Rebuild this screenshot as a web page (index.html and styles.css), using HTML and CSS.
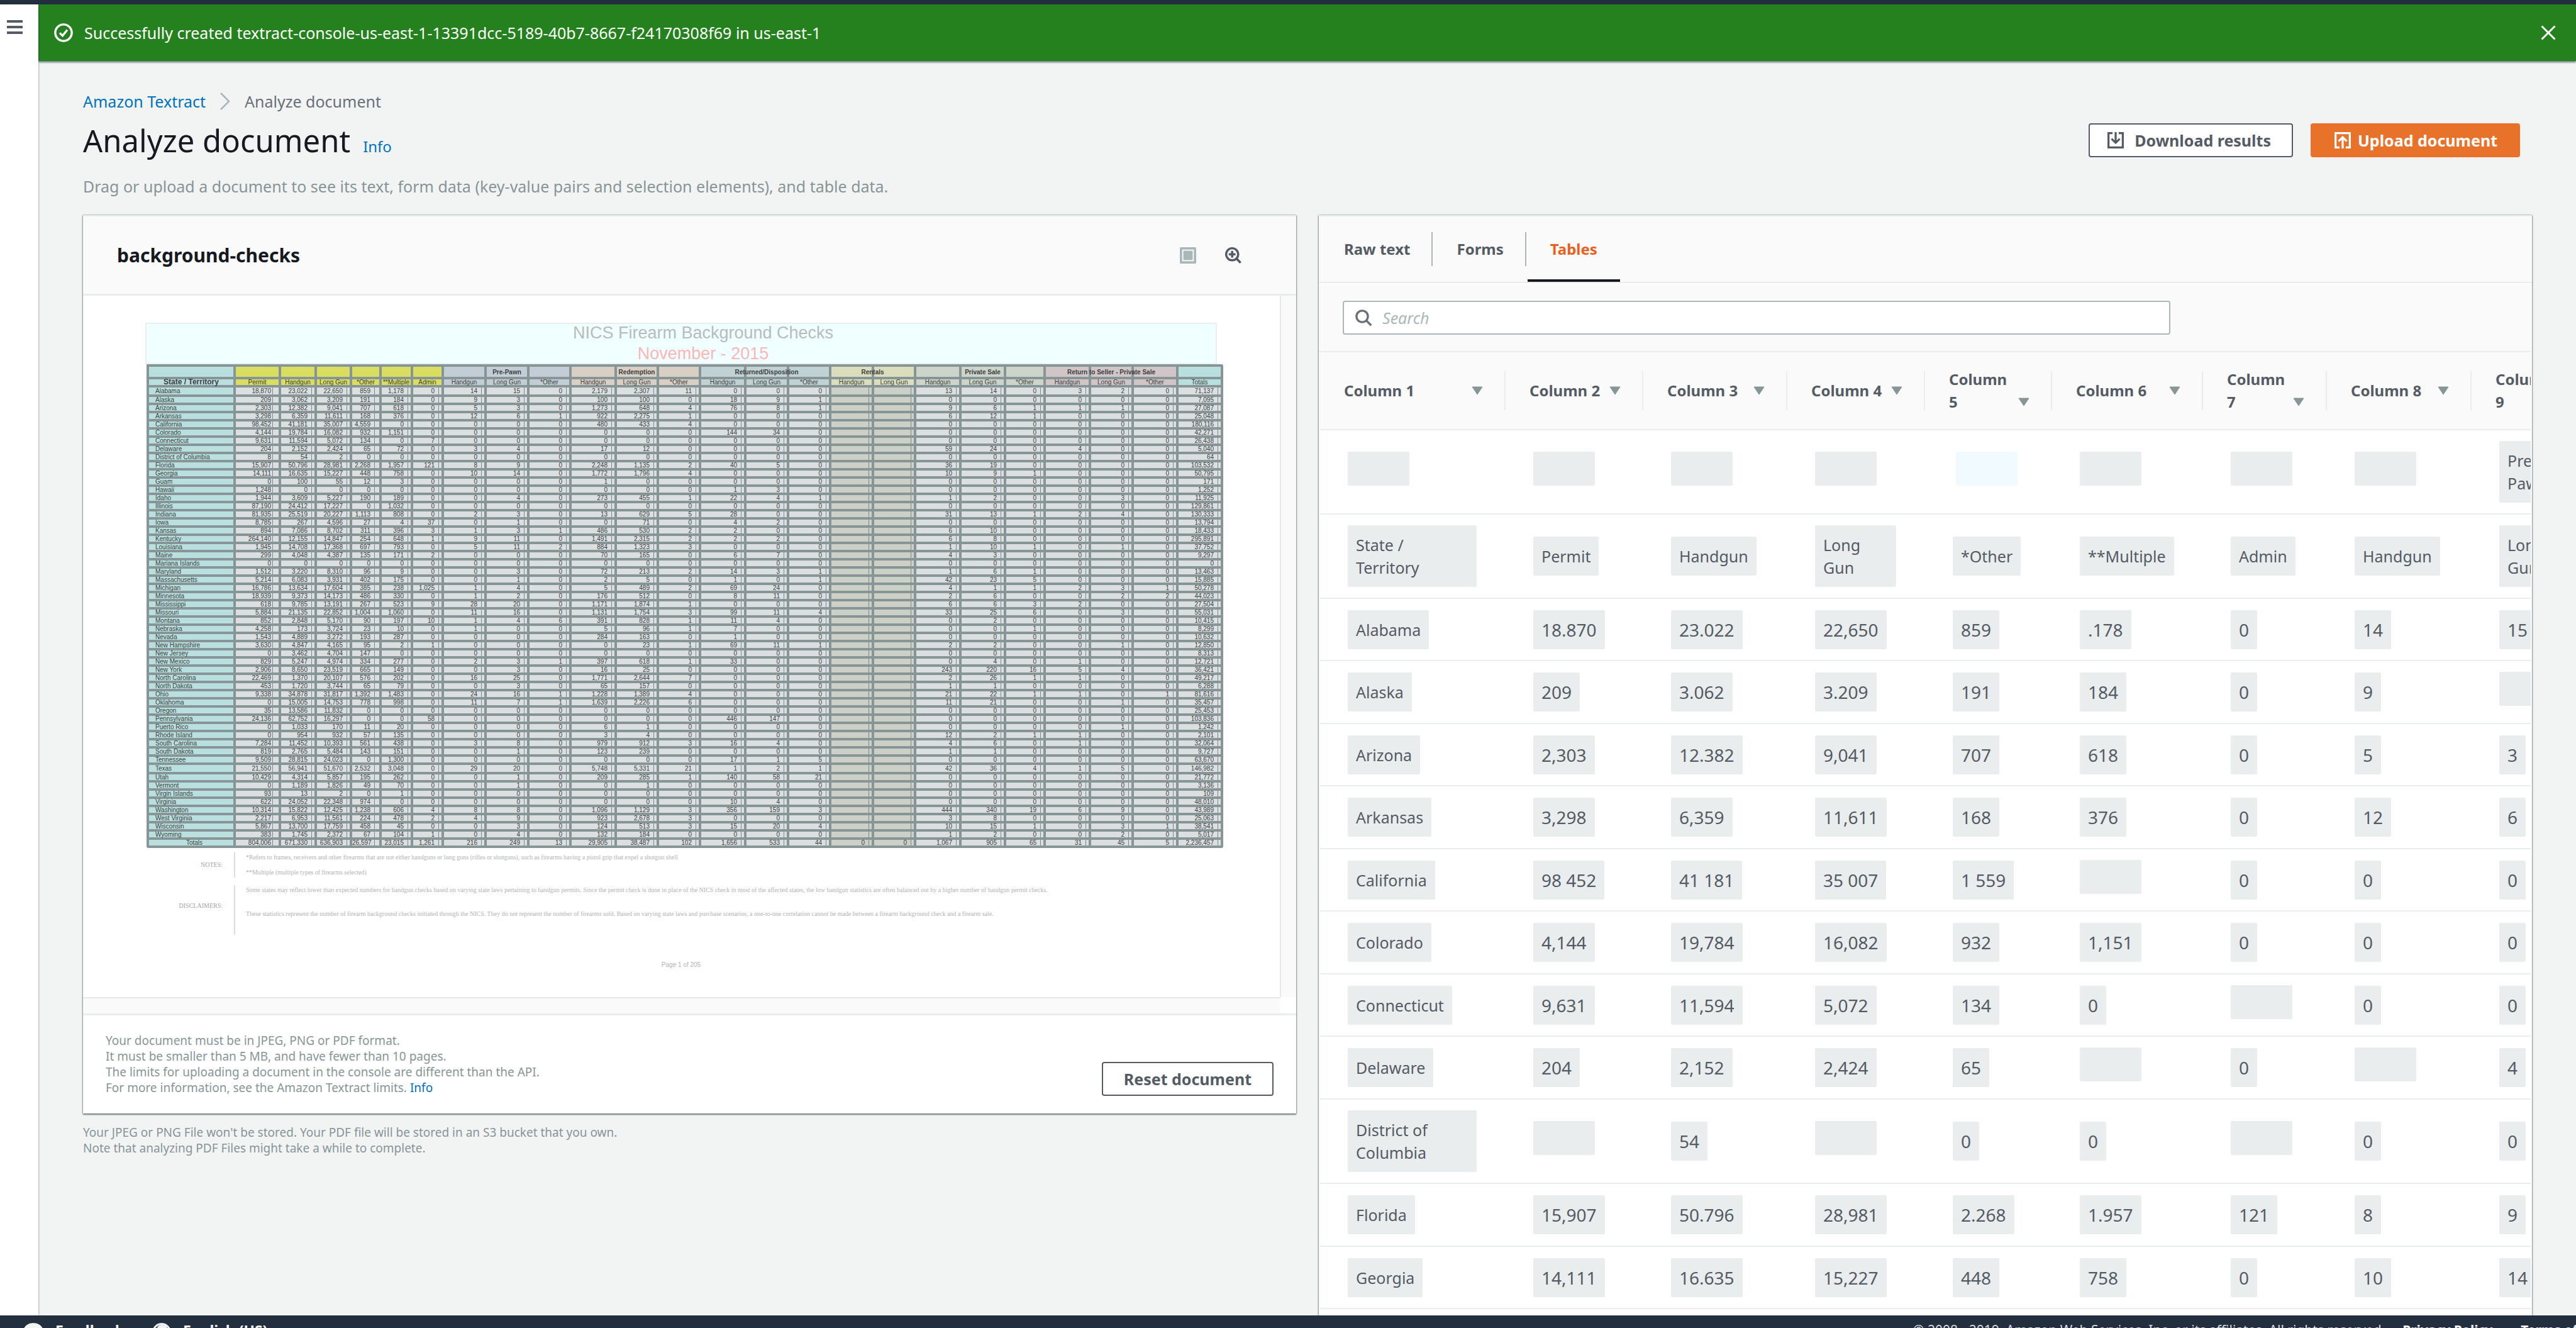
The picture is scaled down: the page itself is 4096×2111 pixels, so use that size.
FILE: index.html
```html
<!DOCTYPE html>
<html lang="en">
<head>
<meta charset="utf-8">
<title>Analyze document - Amazon Textract</title>
<link rel="stylesheet" href="styles.css">
</head>
<body>
<div class="topbar"></div>
<div class="shell">
  <nav class="sidenav" aria-label="Service navigation">
    <button class="menu" type="button" aria-label="Open navigation"><span></span><span></span><span></span></button>
  </nav>
  <div class="page">
    <div class="flash" role="status">
      <svg class="flash-icon" viewBox="0 0 16 16" fill="none" stroke="#fff" stroke-width="1.8"><circle cx="8" cy="8" r="7"/><path d="M4.8 8.2 7.2 10.5 11.2 5.6"/></svg>
      <span class="flash-text">Successfully created textract-console-us-east-1-13391dcc-5189-40b7-8667-f24170308f69 in us-east-1</span>
      <button class="dismiss" type="button" aria-label="Dismiss"><svg viewBox="0 0 16 16" fill="none" stroke="#fff" stroke-width="2"><path d="M1 1 15 15M15 1 1 15"/></svg></button>
    </div>
    <main class="content">
      <nav class="crumbs" aria-label="Breadcrumbs">
        <a href="#">Amazon Textract</a>
        <svg class="chevron" viewBox="0 0 18 28" fill="none" stroke="#aab7b8" stroke-width="2.6"><path d="M2 1 15 14 2 27"/></svg>
        <span>Analyze document</span>
      </nav>
      <div class="heading">
        <h1>Analyze document</h1>
        <a class="info" href="#">Info</a>
        <div class="actions">
          <button class="btn download" type="button"><svg class="btn-icon" viewBox="0 0 16 16" fill="none" stroke="currentColor" stroke-width="2"><path d="M5 1H1v14h14V1h-4M8 0v10M4 6.5l4 4 4-4"/></svg>Download results</button>
          <button class="btn primary" type="button"><svg class="btn-icon" viewBox="0 0 16 16" fill="none" stroke="currentColor" stroke-width="2"><path d="M5 15H1V1h14v14h-4M8 16V5M4 9l4-4 4 4"/></svg>Upload document</button>
        </div>
      </div>
      <p class="lead">Drag or upload a document to see its text, form data (key-value pairs and selection elements), and table data.</p>

      <div class="panels">
        <div class="left">
          <section class="card">
            <header class="card-head">
              <h2>background-checks</h2>
              <button class="tool" type="button" aria-label="Fit page"><svg viewBox="0 0 28 28"><rect width="28" height="28" rx="2" fill="#aab7b8"/><rect x="5" y="5" width="18" height="18" fill="none" stroke="#fafafa" stroke-width="2"/></svg></button>
              <button class="tool" type="button" aria-label="Zoom in"><svg viewBox="0 0 29 29" fill="none" stroke="#545b64"><circle cx="12.5" cy="12.5" r="10.7" stroke-width="3.8"/><path d="M12.5 6.5v12M6.5 12.5h12" stroke-width="4"/><path d="M20.5 20.5 27.5 27.5" stroke-width="4"/></svg></button>
            </header>
            <div class="viewer">
              <div class="sheet">
                <div class="sheet-title"><p>NICS Firearm Background Checks</p><p class="month">November - 2015</p></div>
                <table class="grid" id="grid"></table>
                <div class="notes">
                  <p class="label">NOTES:</p>
                  <div class="note"><p>*Refers to frames, receivers and other firearms that are not either handguns or long guns (rifles or shotguns), such as firearms having a pistol grip that expel a shotgun shell</p><p>**Multiple (multiple types of firearms selected)</p></div>
                  <p class="label disclaimer">DISCLAIMERS:</p>
                  <div class="note wide"><p>Some states may reflect lower than expected numbers for handgun checks based on varying state laws pertaining to handgun permits. Since the permit check is done in place of the NICS check in most of the affected states, the low handgun statistics are often balanced out by a higher number of handgun permit checks.</p><p>These statistics represent the number of firearm background checks initiated through the NICS. They do not represent the number of firearms sold. Based on varying state laws and purchase scenarios, a one-to-one correlation cannot be made between a firearm background check and a firearm sale.</p></div>
                </div>
                <p class="folio">Page 1 of 205</p>
              </div>
              <div class="track-v"></div>
              <div class="track-h"></div>
            </div>
            <footer class="card-foot">
              <p>Your document must be in JPEG, PNG or PDF format.<br>It must be smaller than 5 MB, and have fewer than 10 pages.<br>The limits for uploading a document in the console are different than the API.<br>For more information, see the Amazon Textract limits. <a href="#">Info</a></p>
              <button class="btn reset" type="button">Reset document</button>
            </footer>
          </section>
          <p class="storage">Your JPEG or PNG File won't be stored. Your PDF file will be stored in an S3 bucket that you own.<br>Note that analyzing PDF Files might take a while to complete.</p>
        </div>

        <section class="card results">
          <div class="tabs" role="tablist">
            <button type="button" role="tab">Raw text</button>
            <button type="button" role="tab">Forms</button>
            <button type="button" role="tab" aria-selected="true">Tables</button>
          </div>
          <div class="filter">
            <label class="search">
              <svg viewBox="0 0 16 16" fill="none" stroke="#687078" stroke-width="2"><circle cx="6.5" cy="6.5" r="5.4"/><path d="M10.3 10.3 15 15"/></svg>
              <input type="text" placeholder="Search" aria-label="Search">
            </label>
          </div>
          <div class="scroller">
            <table class="cells" id="cells"></table>
          </div>
        </section>
      </div>
    </main>
  </div>
</div>
<footer class="bottombar">
  <a href="#"><svg class="bubble" viewBox="0 0 32 32"><path fill="#f2f3f3" d="M16 0C7 0 0 6 0 14s7 14 16 14l8 4-1-6c5-2 9-7 9-12C32 6 25 0 16 0z"/></svg>Feedback</a>
  <a href="#"><svg class="globe" viewBox="0 0 30 30"><circle cx="15" cy="15" r="13.5" fill="#232f3e" stroke="#f2f3f3" stroke-width="3"/><path fill="#f2f3f3" d="M15 3c4 0 7 1 9 4l-4 5-5-2-3 3-5-3c1-4 4-7 8-7z"/></svg>English (US)</a>
  <div class="legal">
    <span>© 2008 - 2019, Amazon Web Services, Inc. or its affiliates. All rights reserved.</span>
    <a href="#">Privacy Policy</a>
    <a href="#">Terms of Use</a>
  </div>
</footer>
<script src="tables.js"></script>
</body>
</html>
```

FILE: styles.css
```css
* { box-sizing: border-box; }

body {
  margin: 0;
  height: 100vh;
  display: flex;
  flex-direction: column;
  overflow: hidden;
  background: #f2f3f3;
  color: #545b64;
  font: 25px/36px "Noto Sans", "Open Sans", sans-serif;
}

h1, h2, p { margin: 0; }
a { color: #0073bb; text-decoration: none; }
button { font: inherit; color: inherit; border: 0; padding: 0; background: none; }
svg { display: block; flex: none; }

.topbar { height: 7px; flex: none; background: #232f3e; }

.shell { flex: 1; min-height: 0; display: flex; }

.sidenav {
  width: 61px;
  flex: none;
  background: #fff;
  box-shadow: 0 0 3px rgba(0, 28, 36, .5);
  z-index: 1;
}
.menu { display: grid; gap: 5px; margin: 25px 0 0 11px; }
.menu span { width: 25px; height: 4px; background: #545b64; }

.page { flex: 1; min-width: 0; display: flex; flex-direction: column; background: #f2f4f4; }

.flash {
  height: 90px;
  flex: none;
  display: flex;
  align-items: center;
  padding: 0 32px 0 25px;
  background: #25811e;
  color: #fff;
  box-shadow: 0 2px 3px rgba(0, 28, 36, .6);
}
.flash-icon { width: 30px; height: 30px; margin-right: 18px; }
.flash-text { flex: 1; }
.dismiss svg { width: 24px; height: 24px; }

.content {
  flex: 1;
  min-height: 0;
  display: flex;
  flex-direction: column;
  padding: 46px 70px 0 71px;
}

.crumbs { display: flex; align-items: center; gap: 22px; color: #687078; }
.chevron { width: 18px; height: 28px; }

.heading { display: flex; align-items: baseline; gap: 20px; height: 54px; margin-top: 17px; }
h1 { font-size: 49px; line-height: 54px; font-weight: 400; color: #16191f; }
.info { font-size: 24px; }
.actions { display: flex; gap: 28px; margin-left: auto; padding-right: 19px; align-self: center; }

.btn {
  display: flex;
  align-items: center;
  justify-content: center;
  height: 54px;
  border: 2px solid #545b64;
  border-radius: 4px;
  background: #fff;
  font-size: 25px;
  font-weight: 700;
}
.btn-icon { width: 26px; height: 26px; }
.download { padding: 0 33px 0 28px; gap: 17px; }
.primary { padding: 0 34px 0 36px; gap: 11px; background: #e9722b; border-color: #e9722b; color: #fff; }
.reset { padding: 0 33px; }

.lead { margin: 28px 0; color: #879596; }

.panels { flex: 1; min-height: 0; display: grid; grid-template-columns: 1fr 1fr; gap: 36px; }
.left, .results { min-width: 0; }

.card {
  background: #fff;
  border-top: 2px solid #eaeded;
  box-shadow: 0 2px 2px rgba(0, 28, 36, .5), 1px 0 2px rgba(0, 28, 36, .3), -1px 0 2px rgba(0, 28, 36, .3);
}
.card-head {
  height: 126px;
  display: flex;
  align-items: center;
  gap: 46px;
  padding: 0 87px 0 54px;
  border-bottom: 3px solid #eaeded;
  background: #fafafa;
}
h2 { flex: 1; font-size: 30px; font-weight: 700; color: #16191f; }
.tool svg { width: 26px; height: 26px; }

/* document preview */
.viewer { display: grid; grid-template: auto 26px / 1fr 26px; border-bottom: 3px solid #eaeded; }
.sheet { height: 1115px; overflow: hidden; padding: 43px 0 0 99px; }
.track-v { border-left: 2px solid #e8e8e8; background: #fafafa; }
.track-h { border-top: 2px solid #e8e8e8; background: #fafafa; }

.sheet-title {
  width: 1704px;
  height: 66px;
  padding-left: 70px;
  background: #f0ffff;
  box-shadow: inset 0 0 0 2px #e9eeee;
  color: #b7bcbc;
  font: 27px/33px "Liberation Sans", Arial, sans-serif;
  text-align: center;
}
.sheet-title .month { color: #ffb5b5; }

.grid {
  table-layout: fixed;
  width: 1708px;
  margin-left: 2px;
  border-collapse: separate;
  border-spacing: 0;
  border-right: 4px solid #879596;
  border-bottom: 4px solid #879596;
  border-radius: 3px;
  color: #3c4142;
  font: 10px/9px "Liberation Sans", Arial, sans-serif;
}
.grid th, .grid td {
  height: 13px;
  padding: 0;
  border-top: 4px solid #879596;
  border-left: 4px solid #879596;
  white-space: nowrap;
}
.grid th { font-weight: 400; text-align: center; }
.grid td {
  padding-right: 11px;
  text-align: right;
  background: linear-gradient(#7d8889, #7d8889) no-repeat right 4px top / 1px 100% #dbdfe0;
}
.grid td:nth-child(2) { background-position: right 9px top; padding-right: 12px; }
.grid td:nth-child(5) { background-position: right 7px top; padding-right: 14px; }
.grid td:nth-child(17), .grid td:nth-child(18) { background-color: #cdd0c7; }
.grid .group th { height: 20px; font-weight: 700; }
.grid .over { margin: 0 -60px; }
.grid .head th:first-child { font-weight: 700; font-size: 12px; }
.grid tbody th { padding-left: 10px; text-align: left; background: #b9e0df; }
.grid .tall > * { height: 15px; }
.grid .sum th { text-align: center; }
.c-state { background: #b9e0df; }
.c-sale { background: #d9dd60; }
.c-pawn { background: #c3cdd5; }
.c-redeem { background: #d9cfc5; }
.c-return { background: #c1d2d4; }
.c-rent { background: #dadebc; }
.c-rent.span { background: linear-gradient(#879596, #879596) no-repeat 64px 0 / 4px 100% #dadebc; }
.c-private { background: #cdd4c9; }
.c-seller { background: #d1c5c7; }

.notes {
  display: grid;
  grid-template-columns: 123px 1fr;
  gap: 12px 18px;
  margin-top: 7px;
  color: #b0b3b3;
  font: 10px/16px "Liberation Serif", "Times New Roman", serif;
}
.label { text-align: right; align-self: center; color: #a0a3a3; }
.disclaimer { margin-bottom: 14px; }
.note { display: grid; gap: 8px; border-left: 2px solid #dcdede; padding-left: 17px; white-space: nowrap; }
.wide { gap: 22px; height: 79px; align-content: start; }
.folio { width: 1704px; margin-top: 40px; text-align: center; color: #b0b3b3; font: 10px/16px "Liberation Sans", Arial, sans-serif; }

.card-foot { display: flex; justify-content: space-between; align-items: flex-end; padding: 28px 36px; }
.card-foot p, .storage { font-size: 19px; line-height: 25px; color: #879596; }
.storage { margin-top: 18px; }

/* results */
.results { background: #fafafa; overflow: hidden; }
.tabs { display: flex; height: 106px; padding-left: 4px; border-bottom: 2px solid #eaeded; }
.tabs button { position: relative; padding: 0 36px; margin-right: 2px; font-size: 24px; font-weight: 700; }
.tabs button:not(:last-child)::after { content: ""; position: absolute; right: 0; top: 25px; height: 54px; width: 2px; background: #aab7b8; }
.tabs [aria-selected] { color: #eb5f1d; border-bottom: 4px solid #16191f; padding-top: 4px; }

.filter { border-top: 2px solid #fff; border-bottom: 2px solid #eaeded; padding: 26px 36px 26px 38px; margin: 0 2px 0 0; }
.search { display: flex; align-items: center; gap: 16px; max-width: 1316px; height: 54px; padding: 0 18px; border: 2px solid #aab7b8; border-radius: 4px; background: #fff; }
.search svg { width: 27px; height: 27px; }
.search input { flex: 1; min-width: 0; border: 0; padding: 0; font: inherit; background: none; outline: 0; }
.search input::placeholder { color: #aab7b8; font-style: italic; opacity: 1; }

.scroller { margin: 0 2px; overflow: hidden; height: 100%; background: #fff; }
.cells { table-layout: fixed; width: 2033px; border-collapse: separate; border-spacing: 0; }
.cells th { height: 124px; padding: 0; border-bottom: 2px solid #eaeded; background: #fafafa; font-size: 24px; text-align: left; }
.colhead { display: flex; align-items: center; height: 62px; padding: 0 34px 0 38px; border-right: 2px solid #eaeded; }
.sort { flex: 1; display: flex; align-items: flex-end; justify-content: space-between; font-weight: 700; text-align: left; }
.sort svg { width: 18px; height: 14px; margin-bottom: 11px; }
.cells td { height: 99px; padding: 0 46px 0 44px; border-bottom: 2px solid #eaeded; vertical-align: middle; }
.cells tr:nth-child(even) td { height: 100px; }
.cells tr.double:nth-child(n) td { height: 134px; }
.pill { display: block; width: fit-content; padding: 13px; border-radius: 2px; background: #e9eded; }
.num { font-size: 28px; }
.pill.empty { width: 98px; height: 54px; margin-bottom: 10px; padding: 0; }
.pill.selected { margin-left: 5px; background: #f1faff; }

.bottombar {
  height: 20px;
  flex: none;
  overflow: hidden;
  display: flex;
  align-items: flex-start;
  padding: 12px 0 0 37px;
  background: #232f3e;
  color: #d5dbdb;
  font-size: 23px;
  line-height: 24px;
  white-space: nowrap;
  z-index: 2;
}
.bottombar a { display: flex; gap: 19px; margin-right: 45px; color: #f2f3f3; font-weight: 700; }
.bubble { width: 32px; height: 32px; }
.globe { width: 30px; height: 30px; }
.legal { display: flex; margin: 0 -92px 0 auto; font-size: 21px; line-height: 22px; }
.legal span { margin-right: 28px; }
```

FILE: tables.js
```js
// Columns of the preview grid: width and tint
const columns = [
  [138, "state", "State / Territory"], [72, "sale", "Permit"], [57, "sale", "Handgun"], [56, "sale", "Long Gun"],
  [47, "sale", "*Other"], [50, "sale", "**Multiple"], [49, "sale", "Admin"],
  [68, "pawn", "Handgun"], [68, "pawn", "Long Gun"], [67, "pawn", "*Other"],
  [72, "redeem", "Handgun"], [67, "redeem", "Long Gun"], [67, "redeem", "*Other"],
  [72, "return", "Handgun"], [68, "return", "Long Gun"], [67, "return", "*Other"],
  [68, "rent", "Handgun"], [67, "rent", "Long Gun"],
  [72, "private", "Handgun"], [71, "private", "Long Gun"], [63, "private", "*Other"],
  [72, "seller", "Handgun"], [68, "seller", "Long Gun"], [71, "seller", "*Other"],
  [71, "state", "Totals"]
];
const groups = { 8: "Pre-Pawn", 11: "Redemption", 14: "Returned/Disposition", 19: "Private Sale", 22: "Return to Seller - Private Sale" };

// "-" marks an empty cell
const checks = `Alabama|18,870 23,022 22,650 859 1,178 0 14 15 0 2,179 2,307 11 0 0 0 - - 13 14 0 3 2 0 71,137
Alaska|209 3,062 3,209 191 184 0 9 3 0 100 100 0 18 9 1 - - 0 0 0 0 0 0 7,095
Arizona|2,303 12,382 9,041 707 618 0 5 3 0 1,273 648 4 76 8 1 - - 9 6 1 1 1 0 27,087
Arkansas|3,298 6,359 11,611 168 376 0 12 6 1 922 2,275 1 0 0 0 - - 6 12 1 0 0 0 25,048
California|98,452 41,181 35,007 4,559 0 0 0 0 0 480 433 4 0 0 0 - - 0 0 0 0 0 0 180,116
Colorado|4,144 19,784 16,082 932 1,151 0 0 0 0 0 0 0 144 34 0 - - 0 0 0 0 0 0 42,271
Connecticut|9,631 11,594 5,072 134 0 7 0 0 0 0 0 0 0 0 0 - - 0 0 0 0 0 0 26,438
Delaware|204 2,152 2,424 65 72 0 3 4 0 17 12 0 0 0 0 - - 59 24 0 4 0 0 5,040
District of Columbia|8 54 2 0 0 0 0 0 0 0 0 0 0 0 0 - - 0 0 0 0 0 0 64
Florida|15,907 50,796 28,981 2,268 1,957 121 8 9 0 2,248 1,135 2 40 5 0 - - 36 19 0 0 0 0 103,532
Georgia|14,111 16,635 15,227 448 758 0 10 14 0 1,772 1,796 4 0 0 0 - - 10 9 1 0 0 0 50,795
Guam|0 100 55 12 3 0 0 0 0 1 0 0 0 0 0 - - 0 0 0 0 0 0 171
Hawaii|1,248 0 0 0 0 0 0 0 0 0 0 0 1 3 0 - - 0 0 0 0 0 0 1,252
Idaho|1,944 3,609 5,227 190 189 0 0 4 0 273 455 1 22 4 1 - - 1 2 0 0 3 0 11,925
Illinois|87,190 24,412 17,227 0 1,032 0 0 0 0 0 0 0 0 0 0 - - 0 0 0 0 0 0 129,861
Indiana|81,935 25,519 20,227 1,113 808 0 2 3 0 13 629 5 28 0 0 - - 31 13 1 2 4 0 130,333
Iowa|8,785 267 4,596 27 4 37 0 1 0 0 71 0 4 2 0 - - 0 0 0 0 0 0 13,794
Kansas|894 7,086 8,702 311 396 3 1 3 1 486 530 2 2 0 0 - - 6 10 0 0 0 0 18,433
Kentucky|264,140 12,155 14,847 254 648 1 9 11 0 1,491 2,315 2 2 2 0 - - 6 8 0 0 0 0 295,891
Louisiana|1,945 14,708 17,368 697 793 0 5 11 2 884 1,323 3 0 0 0 - - 1 10 1 0 1 0 37,752
Maine|299 4,048 4,387 135 171 2 0 0 0 70 165 0 6 7 0 - - 4 3 0 0 0 0 9,297
Mariana Islands|0 0 0 0 0 0 0 0 0 0 0 0 0 0 0 - - 0 0 0 0 0 0 0
Maryland|1,512 3,220 8,310 96 9 0 0 3 0 72 213 2 14 3 1 - - 1 6 1 0 0 0 13,463
Massachusetts|5,214 6,083 3,931 402 175 0 0 1 0 2 5 0 1 0 1 - - 42 23 5 0 0 0 15,885
Michigan|16,786 13,634 17,604 385 238 1,025 1 4 0 5 489 2 69 24 0 - - 4 1 1 2 3 1 50,278
Minnesota|18,939 9,373 14,173 486 330 0 1 2 0 176 512 0 8 11 0 - - 2 6 0 0 2 2 44,023
Mississippi|618 9,785 13,191 267 523 9 28 20 0 1,171 1,874 1 0 0 0 - - 6 6 3 2 0 0 27,504
Missouri|5,884 21,135 22,852 1,004 1,060 0 11 16 0 1,131 1,754 3 99 11 4 - - 33 25 6 0 3 0 55,031
Montana|852 2,848 5,170 90 197 10 1 4 6 391 828 1 11 4 0 - - 0 2 0 0 0 0 10,415
Nebraska|4,258 173 3,724 23 10 0 1 0 0 5 96 1 7 0 0 - - 0 0 1 0 0 0 8,299
Nevada|1,543 4,889 3,272 193 287 0 0 0 0 284 163 0 1 0 0 - - 0 0 0 0 0 0 10,632
New Hampshire|3,630 4,847 4,165 95 2 1 0 0 0 0 23 1 69 11 1 - - 2 2 0 0 1 0 12,850
New Jersey|0 3,462 4,704 147 0 0 0 0 0 0 0 0 0 0 0 - - 0 0 0 0 0 0 8,313
New Mexico|829 5,247 4,974 334 277 0 2 3 1 397 618 1 33 0 0 - - 0 4 0 1 0 0 12,721
New York|2,906 8,650 23,519 665 149 0 0 3 0 16 25 0 0 0 0 - - 243 220 16 5 4 0 36,421
North Carolina|22,469 1,370 20,107 576 202 0 16 25 0 1,771 2,644 7 0 0 0 - - 2 26 1 1 0 0 49,217
North Dakota|453 1,720 3,744 65 79 0 0 3 0 65 157 0 0 0 0 - - 1 1 0 0 0 0 6,288
Ohio|9,338 34,878 31,817 1,392 1,483 0 24 16 1 1,228 1,389 4 0 0 0 - - 21 22 1 1 0 1 81,616
Oklahoma|0 15,005 14,753 778 998 0 11 7 1 1,639 2,226 6 0 0 0 - - 11 21 0 0 1 0 35,457
Oregon|35 13,586 11,832 0 0 0 0 0 0 0 0 0 0 0 0 - - 0 0 0 0 0 0 25,453
Pennsylvania|24,136 62,752 16,297 0 0 58 0 0 0 0 0 0 446 147 0 - - 0 0 0 0 0 0 103,836
Puerto Rico|0 1,033 170 11 20 0 0 0 0 6 1 0 0 0 0 - - 0 0 0 0 1 0 1,242
Rhode Island|0 954 932 57 135 0 0 0 0 3 4 0 0 0 0 - - 12 2 1 1 0 0 2,101
South Carolina|7,284 11,452 10,393 561 438 0 3 8 0 979 912 3 16 4 0 - - 4 6 0 1 0 0 32,064
South Dakota|819 2,765 5,484 143 151 0 0 1 0 123 239 0 0 0 0 - - 1 1 0 0 0 0 9,727
Tennessee|9,509 28,815 24,023 0 1,300 0 0 0 0 0 0 0 17 1 5 - - 0 0 0 0 0 0 63,670
Texas|21,550 56,941 51,670 2,532 3,048 0 29 20 0 5,748 5,331 21 1 2 1 - - 42 36 4 1 5 0 146,982
Utah|10,429 4,314 5,857 195 262 0 0 1 0 209 285 1 140 58 21 - - 0 0 0 0 0 0 21,772
Vermont|0 1,189 1,826 49 70 0 0 1 0 0 1 0 0 0 0 - - 0 0 0 0 0 0 3,136
Virgin Islands|93 13 2 0 1 0 0 0 0 0 0 0 0 0 0 - - 0 0 0 0 0 0 109
Virginia|622 24,052 22,348 974 0 0 0 0 0 0 0 0 10 4 0 - - 0 0 0 0 0 0 48,010
Washington|10,314 15,822 12,425 1,238 606 4 8 8 0 1,096 1,129 3 356 159 3 - - 444 340 19 6 9 0 43,989
West Virginia|2,217 6,953 11,561 224 478 2 4 9 0 923 2,678 3 0 0 0 - - 3 8 0 0 0 0 25,063
Wisconsin|5,867 13,700 17,759 458 45 0 0 3 0 124 513 3 15 20 4 - - 10 15 1 0 3 1 38,541
Wyoming|383 1,745 2,372 67 104 1 0 4 0 132 184 0 0 0 0 - - 1 2 0 0 2 0 5,017
Totals|804,006 671,330 636,903 26,597 23,015 1,261 216 249 13 29,905 38,487 102 1,656 533 44 0 0 1,067 905 65 31 45 5 2,236,457`;

const tall = ["Alabama", "Texas"];

document.getElementById("grid").innerHTML =
  "<colgroup>" + columns.map(c => `<col style="width:${c[0]}px">`).join("") + "</colgroup>" +
  "<thead><tr class='group'>" + columns.map((c, i) => {
    if (i === 16) return "<th class='c-rent span' colspan='2'>Rentals</th>";
    if (i === 17) return "";
    return `<th class="c-${c[1]}">${groups[i] ? `<div class="over">${groups[i]}</div>` : ""}</th>`;
  }).join("") + "</tr><tr class='head'>" +
  columns.map(c => `<th class="c-${c[1]}">${c[2]}</th>`).join("") + "</tr></thead><tbody>" +
  checks.split("\n").map(line => {
    const [name, values] = line.split("|");
    const cls = tall.includes(name) ? "tall" : name === "Totals" ? "sum" : "";
    return `<tr class="${cls}"><th scope="row">${name}</th>` +
      values.split(" ").map(v => `<td>${v === "-" ? "" : v}</td>`).join("") + "</tr>";
  }).join("") + "</tbody>";

// Extracted table: "~" is an empty cell, "!" the selected one
const widths = [295, 219, 229, 219, 202, 240, 197, 230, 202];
const rows = [
  "~|~|~|~|!|~|~|~|Pre-<br>Pawn",
  "State / Territory|Permit|Handgun|Long Gun|*Other|**Multiple|Admin|Handgun|Long Gun",
  "Alabama|18.870|23.022|22,650|859|.178|0|14|15",
  "Alaska|209|3.062|3.209|191|184|0|9|~",
  "Arizona|2,303|12.382|9,041|707|618|0|5|3",
  "Arkansas|3,298|6,359|11,611|168|376|0|12|6",
  "California|98 452|41 181|35 007|1 559|~|0|0|0",
  "Colorado|4,144|19,784|16,082|932|1,151|0|0|0",
  "Connecticut|9,631|11,594|5,072|134|0|~|0|0",
  "Delaware|204|2,152|2,424|65|~|0|~|4",
  "District of Columbia|~|54|~|0|0|~|0|0",
  "Florida|15,907|50.796|28,981|2.268|1.957|121|8|9",
  "Georgia|14,111|16.635|15,227|448|758|0|10|14"
];
const doubles = [0, 1, 10];

document.getElementById("cells").innerHTML =
  "<colgroup>" + widths.map(w => `<col style="width:${w}px">`).join("") + "</colgroup><thead><tr>" +
  widths.map((w, i) => `<th scope="col"><div class="colhead"><button class="sort" type="button"><span>Column ${i + 1}</span><svg viewBox="0 0 18 14"><path fill="#879596" stroke="#879596" stroke-linejoin="round" d="M1 1h16L9 13z"/></svg></button></div></th>`).join("") +
  "</tr></thead><tbody>" +
  rows.map((row, r) => `<tr class="${doubles.includes(r) ? "double" : ""}">` + row.split("|").map(v => {
    if (v === "~") return "<td><span class='pill empty'></span></td>";
    if (v === "!") return "<td><span class='pill empty selected'></span></td>";
    return `<td><span class="pill${/^[\d.]/.test(v) ? " num" : ""}">${v}</span></td>`;
  }).join("") + "</tr>").join("") + "</tbody>";
```
